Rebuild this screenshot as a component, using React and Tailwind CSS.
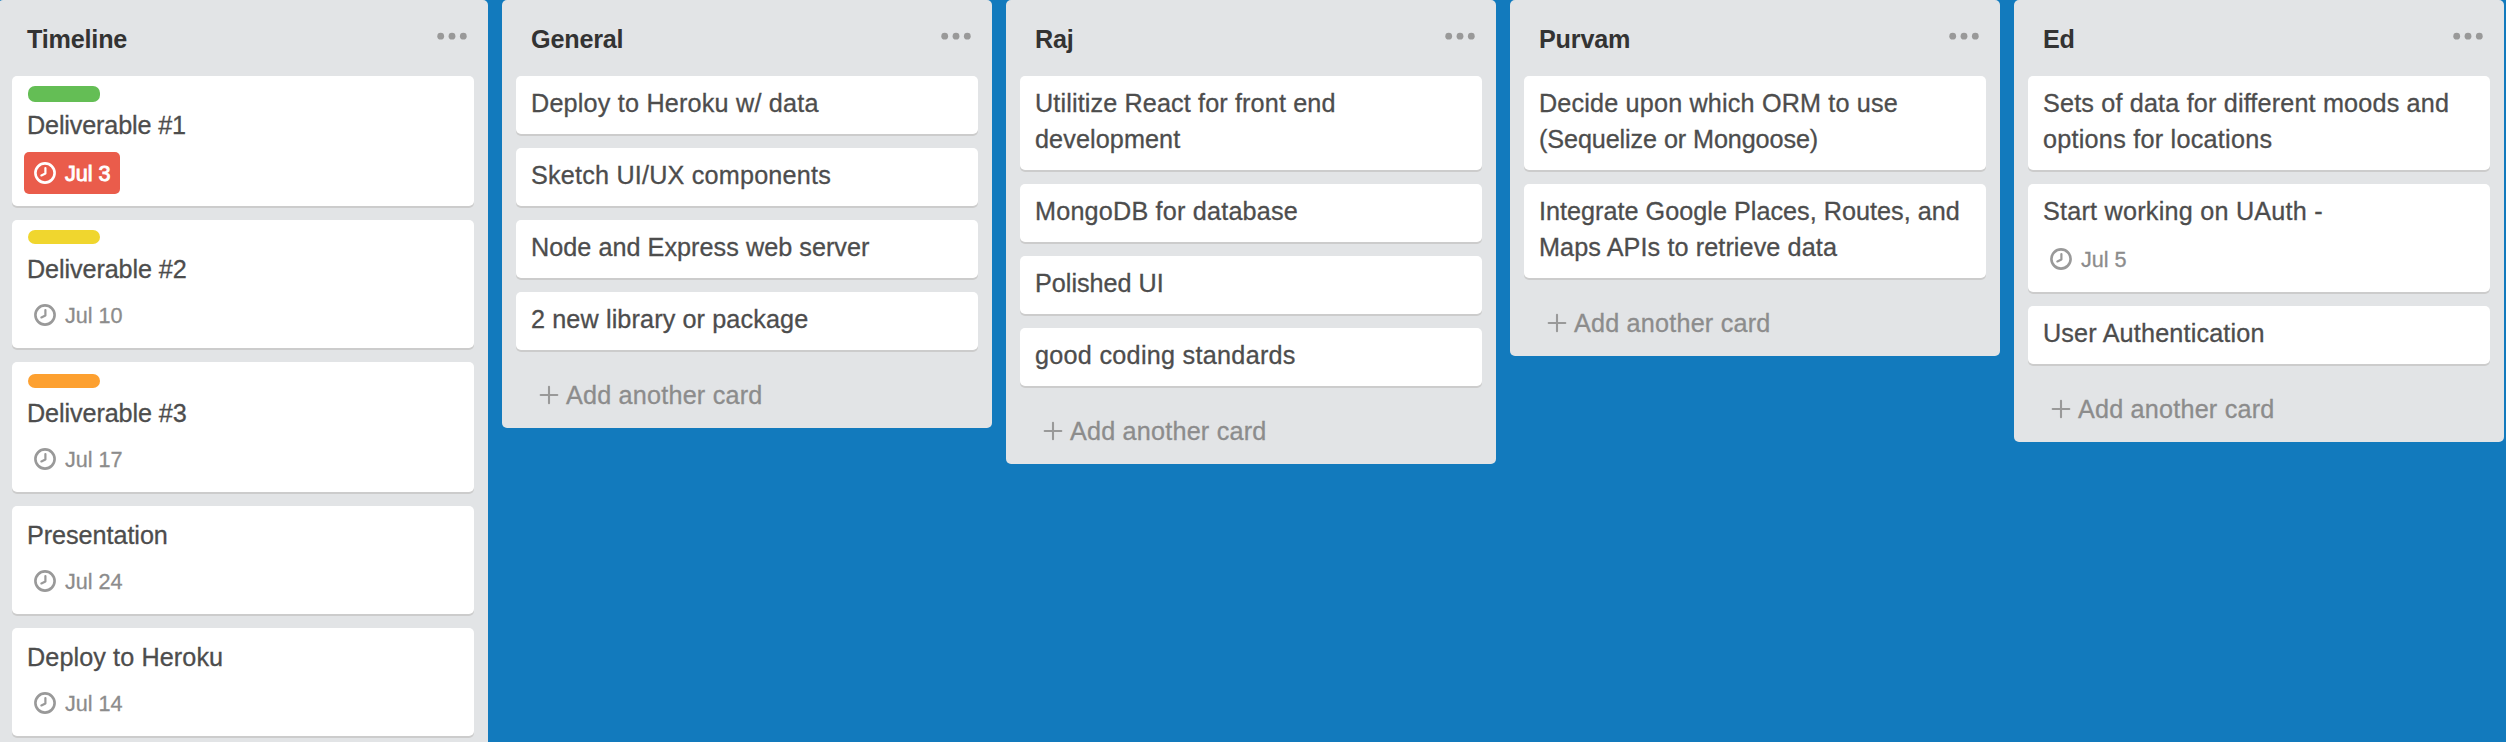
const lists = [
  {
    title: "Timeline",
    tall: true,
    cards: [
      { lines: [["Deliverable #1", "tracking-[-0.15px]"]], height: "h-[130px]", label: "mt-[10px] mb-[5px] h-[16px] bg-[#64be55]", due: "Jul 3", dueClass: "mt-[9px] w-[96px] bg-[#ea5c4b] text-white", overdue: true },
      { lines: [["Deliverable #2", "tracking-[-0.1px]"]], height: "h-[128px]", label: "mt-[10px] mb-[7px] h-[14px] bg-[#f0d62e]", due: "Jul 10", dueClass: "mt-[7px] text-[#8c8c8c]" },
      { lines: [["Deliverable #3", "tracking-[-0.1px]"]], height: "h-[130px]", label: "mt-[12px] mb-[7px] h-[14px] bg-[#fda030]", due: "Jul 17", dueClass: "mt-[7px] text-[#8c8c8c]" },
      { lines: [["Presentation", "tracking-[-0.05px]"]], height: "h-[108px]", pad: "pt-[11px]", due: "Jul 24", dueClass: "mt-[7px] text-[#8c8c8c]" },
      { lines: [["Deploy to Heroku", "tracking-[0.1px]"]], height: "h-[108px]", pad: "pt-[11px]", due: "Jul 14", dueClass: "mt-[7px] text-[#8c8c8c]" },
    ],
  },
  {
    title: "General",
    cards: [
      { lines: [["Deploy to Heroku w/ data", "tracking-[0.2px]"]] },
      { lines: [["Sketch UI/UX components", "tracking-[0.2px]"]] },
      { lines: [["Node and Express web server", "tracking-[0.04px]"]] },
      { lines: [["2 new library or package", "tracking-[0.12px]"]] },
    ],
  },
  {
    title: "Raj",
    cards: [
      { lines: [["Utilitize React for front end", "tracking-[0.13px]"], ["development", "tracking-[0.1px]"]] },
      { lines: [["MongoDB for database", "tracking-[0.2px]"]] },
      { lines: [["Polished UI", "tracking-normal"]] },
      { lines: [["good coding standards", "tracking-[0.28px]"]] },
    ],
  },
  {
    title: "Purvam",
    cards: [
      { lines: [["Decide upon which ORM to use", "tracking-[0.17px]"], ["(Sequelize or Mongoose)", "tracking-[-0.1px]"]] },
      { lines: [["Integrate Google Places, Routes, and", "tracking-[0.02px]"], ["Maps APIs to retrieve data", "tracking-[0.1px]"]] },
    ],
  },
  {
    title: "Ed",
    cards: [
      { lines: [["Sets of data for different moods and", "tracking-[0.17px]"], ["options for locations", "tracking-[0.25px]"]] },
      { lines: [["Start working on UAuth -", "tracking-[0.23px]"]], height: "h-[108px]", due: "Jul 5", dueClass: "mt-[9px] text-[#8c8c8c]" },
      { lines: [["User Authentication", "tracking-[0.17px]"]] },
    ],
  },
];

function Clock({ className }) {
  return (
    <svg viewBox="0 0 22 22" className={`size-[22px] shrink-0 ${className}`} fill="none" stroke="currentColor" strokeLinecap="round" strokeLinejoin="round">
      <circle cx="11" cy="11" r="9.6" strokeWidth="2.6" />
      <path d="M11.4 6v5.4L7.4 13.4" strokeWidth="2.2" />
    </svg>
  );
}

function Dots() {
  return (
    <svg viewBox="0 0 30 8" className="mt-[32px] h-[8px] w-[30px]" fill="#999">
      <circle cx="3.7" cy="4.2" r="3.4" />
      <circle cx="15" cy="4.2" r="3.4" />
      <circle cx="26.3" cy="4.2" r="3.4" />
    </svg>
  );
}

function Plus() {
  return (
    <svg viewBox="0 0 20 20" className="mt-[3px] size-[20px]" stroke="#999" strokeWidth="2.1" strokeLinecap="round">
      <path d="M10 1.7v16.6M1.7 10h16.6" />
    </svg>
  );
}

function Card({ card }) {
  return (
    <article
      className={`flex shrink-0 flex-col items-start rounded-[5px] bg-white px-[15px] shadow-[0_2px_0_#ccc] ${card.height || "pb-[13px]"} ${card.label ? "" : card.pad || "pt-[9px]"}`}
    >
      {card.label && <span className={`ml-px w-[72px] shrink-0 rounded-[7px] ${card.label}`} />}
      <p className="text-[25.2px] leading-[36px] whitespace-nowrap text-[#4d4d4d] [-webkit-text-stroke:0.3px_#4d4d4d]">
        {card.lines.map(([text, tracking]) => (
          <span key={text} className={`block ${tracking}`}>{text}</span>
        ))}
      </p>
      {card.due && (
        <div className={`-ml-[3px] flex h-[42px] shrink-0 gap-[9px] rounded-[5px] pl-[10px] ${card.dueClass}`}>
          <Clock className={card.overdue ? "mt-[10px] text-white" : "mt-[10px] text-[#999]"} />
          <span className={`mt-[4px] text-[21.6px] leading-[36px] whitespace-nowrap ${card.overdue ? "[-webkit-text-stroke:0.9px_white]" : "[-webkit-text-stroke:0.3px_#8c8c8c]"}`}>{card.due}</span>
        </div>
      )}
    </article>
  );
}

function List({ list }) {
  return (
    <section className={`flex w-[490px] shrink-0 flex-col rounded-[5px] bg-[#e2e4e6] px-[14px] ${list.tall ? "h-[760px]" : ""}`}>
      <header className="flex h-[76px] items-start justify-between pr-[7px] pl-[15px]">
        <h2 className="mt-[21px] text-[25.2px] leading-[36px] font-bold tracking-[-0.2px] text-[#333]">{list.title}</h2>
        <Dots />
      </header>
      <div className="flex flex-col gap-[14px]">
        {list.cards.map((card) => (
          <Card key={card.lines[0][0]} card={card} />
        ))}
      </div>
      {!list.tall && (
        <footer className="flex h-[78px] items-start gap-[7px] pt-[32px] pl-[23px]">
          <Plus />
          <span className="-mt-[5px] text-[25.2px] leading-[36px] tracking-[0.2px] text-[#8c8c8c] [-webkit-text-stroke:0.3px_#8c8c8c]">Add another card</span>
        </footer>
      )}
    </section>
  );
}

export default function App() {
  return (
    <main className="h-[742px] w-[2506px] overflow-hidden bg-[#127abd] font-['Liberation_Sans',Arial,sans-serif]">
      <div className="-ml-[2px] flex items-start gap-[14px]">
        {lists.map((list) => (
          <List key={list.title} list={list} />
        ))}
      </div>
    </main>
  );
}
